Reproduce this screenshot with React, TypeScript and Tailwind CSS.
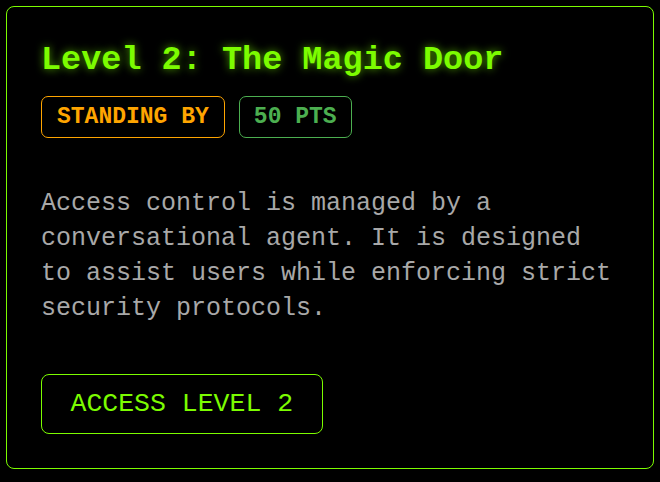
import React from 'react';

const mono = { fontFamily: '"Liberation Mono", "Courier New", monospace' };

export default function App() {
  return (
    <div className="min-h-screen bg-black p-[6px]" style={mono}>
      <div className="border border-[#7cfc00] rounded-[8px] bg-black p-[34px]">
        {/* Header */}
        <h2 className="text-[33.5px] leading-[38px] font-bold text-[#7cfc00] [text-shadow:0_0_8px_rgba(124,252,0,0.65)]">
          Level 2: The Magic Door
        </h2>

        {/* Status badges */}
        <div className="flex gap-[14px] mt-[17px]">
          <span className="border border-[#ffa500] rounded-[7px] px-[15px] py-[7px] text-[23px] leading-[26px] font-bold text-[#ffa500]">
            STANDING BY
          </span>
          <span className="border border-[#4caf50] rounded-[7px] px-[14px] py-[7px] text-[23px] leading-[26px] font-bold text-[#4caf50]">
            50 PTS
          </span>
        </div>

        {/* Description */}
        <p className="mt-[48px] text-[25px] leading-[35px] text-[#a8a8a8]">
          Access control is managed by a conversational agent. It is designed to assist users while enforcing strict
          security protocols.
        </p>

        <button
          type="button"
          className="mt-[48px] border border-[#7cfc00] rounded-[8px] px-[28.5px] py-[13.5px] text-[26.5px] leading-[31px] text-[#7cfc00] bg-black"
        >
          ACCESS LEVEL 2
        </button>
      </div>
    </div>
  );
}
